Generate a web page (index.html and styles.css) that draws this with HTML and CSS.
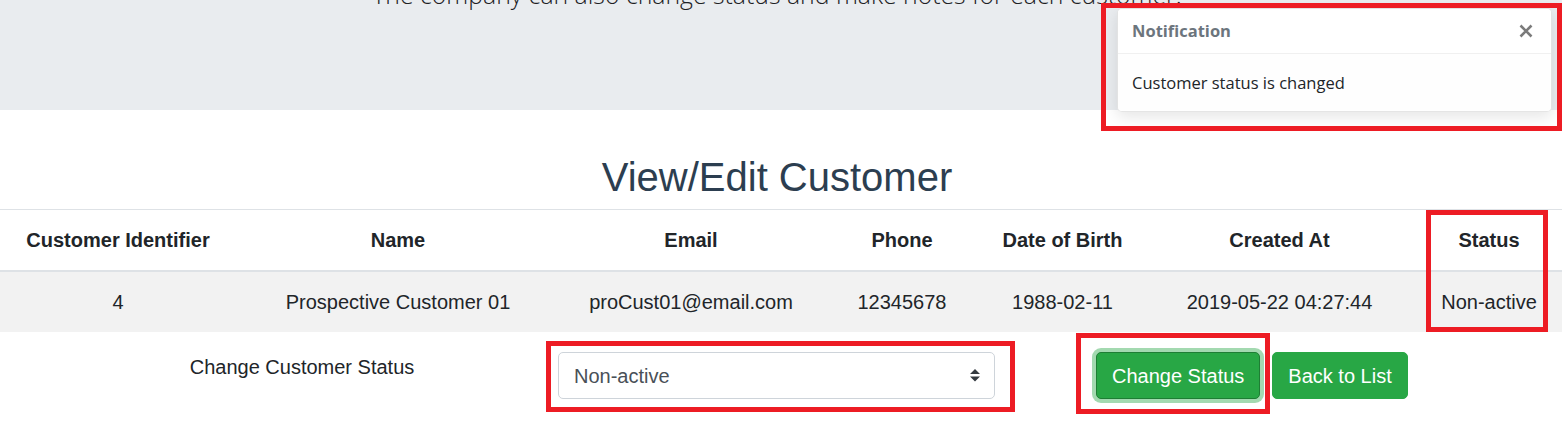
FILE: index.html
```html
<!DOCTYPE html>
<html lang="en">
<head>
<meta charset="utf-8">
<title>View/Edit Customer</title>
<link rel="stylesheet" href="styles.css">
</head>
<body>
<div class="page">
  <div class="jumbotron">
    <p class="lead">The company can also change status and make notes for each customer.</p>
    <div class="toast">
      <div class="toast-header">
        <strong class="toast-title">Notification</strong>
        <span class="toast-close" aria-label="Close">
          <svg width="14" height="14" viewBox="0 0 14 14"><path d="M1.5 1.5L12.5 12.5M12.5 1.5L1.5 12.5" stroke="#7b7b7b" stroke-width="2.6" fill="none"/></svg>
        </span>
      </div>
      <div class="toast-body">Customer status is changed</div>
    </div>
  </div>

  <h2 class="title">View/Edit Customer</h2>

  <table class="table">
    <colgroup>
      <col class="c1"><col class="c2"><col class="c3"><col class="c4"><col class="c5"><col class="c6"><col class="c7">
    </colgroup>
    <thead>
      <tr>
        <th>Customer Identifier</th>
        <th>Name</th>
        <th>Email</th>
        <th>Phone</th>
        <th>Date of Birth</th>
        <th>Created At</th>
        <th>Status</th>
      </tr>
    </thead>
    <tbody>
      <tr class="striped">
        <td>4</td>
        <td>Prospective Customer 01</td>
        <td>proCust01@email.com</td>
        <td>12345678</td>
        <td>1988-02-11</td>
        <td>2019-05-22 04:27:44</td>
        <td>Non-active</td>
      </tr>
    </tbody>
  </table>

  <div class="form-row">
    <label class="form-label" for="status">Change Customer Status</label>
    <div class="select-wrap">
      <select id="status" class="custom-select">
        <option>Non-active</option>
        <option>Active</option>
      </select>
      <svg class="select-arrow" width="10" height="12.5" viewBox="0 0 4 5"><path d="M2 0L0 2h4zm0 5L0 3h4z" fill="#343a40"/></svg>
    </div>
    <div class="buttons">
      <button class="btn btn-success btn-focus">Change Status</button>
      <button class="btn btn-success btn-gap">Back to List</button>
    </div>
  </div>

  <div class="mark mark-toast"></div>
  <div class="mark mark-status"></div>
  <div class="mark mark-select"></div>
  <div class="mark mark-button"></div>
</div>
</body>
</html>
```

FILE: styles.css
```css
* { box-sizing: border-box; }

html, body {
  margin: 0;
  padding: 0;
  background: #ffffff;
}

body {
  font-family: "Liberation Sans", Arial, sans-serif;
  font-size: 20px;
  line-height: 1.5;
  color: #212529;
}

.page {
  position: relative;
  width: 1562px;
  height: 423px;
  overflow: hidden;
}

.jumbotron {
  position: relative;
  display: flow-root;
  background: #e9ecef;
  height: 110px;
}

.lead {
  margin: -24px 0 0 0;
  padding-right: 8px;
  text-align: center;
  font-family: "Open Sans", "Noto Sans", sans-serif;
  font-weight: 300;
  font-size: 24.8px;
  line-height: 1.5;
  color: #1d2124;
}

.toast {
  position: absolute;
  top: 8px;
  right: 10px;
  width: 435px;
  background: rgba(255, 255, 255, 0.85);
  border: 1px solid rgba(0, 0, 0, 0.1);
  border-radius: 5px;
  box-shadow: 0 5px 15px rgba(0, 0, 0, 0.1);
  font-family: "Open Sans", "Noto Sans", sans-serif;
  font-size: 16.5px;
  overflow: hidden;
}

.toast-header {
  display: flex;
  align-items: center;
  justify-content: space-between;
  height: 45px;
  padding: 0 18px 0 14px;
  background: #ffffff;
  border-bottom: 1px solid rgba(0, 0, 0, 0.06);
  color: #6c757d;
}

.toast-title {
  font-weight: 700;
}

.toast-close {
  display: flex;
  width: 14px;
  height: 14px;
}

.toast-body {
  padding: 16px 14px 15px 14px;
  line-height: 26px;
  height: 57px;
  color: #212529;
  background: rgba(255, 255, 255, 0.6);
}

.title {
  margin: 43px 0 8px 0;
  padding-right: 8px;
  text-align: center;
  font-size: 40px;
  font-weight: 400;
  line-height: 1.2;
  color: #2c3e50;
}

.table {
  width: 100%;
  border-collapse: collapse;
  table-layout: fixed;
}

.c1 { width: 236px; }
.c2 { width: 324px; }
.c3 { width: 262px; }
.c4 { width: 160px; }
.c5 { width: 161px; }
.c6 { width: 273px; }
.c7 { width: 146px; }

.table th,
.table td {
  padding: 15px 0;
  line-height: 30px;
  text-align: center;
  white-space: nowrap;
  vertical-align: top;
}

.table th {
  font-weight: 700;
  border-top: 1px solid #dee2e6;
  border-bottom: 2px solid #dee2e6;
}

.striped td {
  background: #f2f2f2;
}

.form-row {
  display: flex;
  align-items: flex-start;
  margin-top: 20px;
}

.form-label {
  width: 490px;
  margin-left: 57px;
  text-align: center;
  line-height: 30px;
  color: #212529;
}

.select-wrap {
  position: relative;
  margin-left: 11px;
  width: 437px;
}

.custom-select {
  display: block;
  width: 437px;
  height: 47px;
  padding: 7.5px 35px 7.5px 15px;
  font-family: "Liberation Sans", Arial, sans-serif;
  font-size: 20px;
  line-height: 30px;
  color: #495057;
  background: #ffffff;
  border: 1px solid #ced4da;
  border-radius: 5px;
  appearance: none;
  -webkit-appearance: none;
  outline: none;
}

.select-arrow {
  position: absolute;
  right: 15px;
  top: 17px;
  pointer-events: none;
}

.buttons {
  display: flex;
  margin-left: 101px;
}

.btn {
  height: 47px;
  padding: 7.5px 15px;
  font-family: "Liberation Sans", Arial, sans-serif;
  font-size: 20px;
  line-height: 30px;
  border-radius: 5px;
  border: 1px solid transparent;
  cursor: pointer;
}

.btn-success {
  color: #ffffff;
  background: #28a745;
  border-color: #28a745;
}

.btn-focus {
  background: #28a745;
  border-color: #1e7e34;
  box-shadow: 0 0 0 4px rgba(72, 180, 97, 0.5);
}

.btn-gap {
  margin-left: 12px;
}

.mark {
  position: absolute;
  border: 5px solid #ed1c24;
  pointer-events: none;
}

.mark-toast { left: 1101px; top: 3px; width: 461px; height: 128px; }
.mark-status { left: 1426px; top: 210px; width: 122px; height: 122px; }
.mark-select { left: 546px; top: 341px; width: 469px; height: 71px; }
.mark-button { left: 1076px; top: 333px; width: 194px; height: 81px; }
```
